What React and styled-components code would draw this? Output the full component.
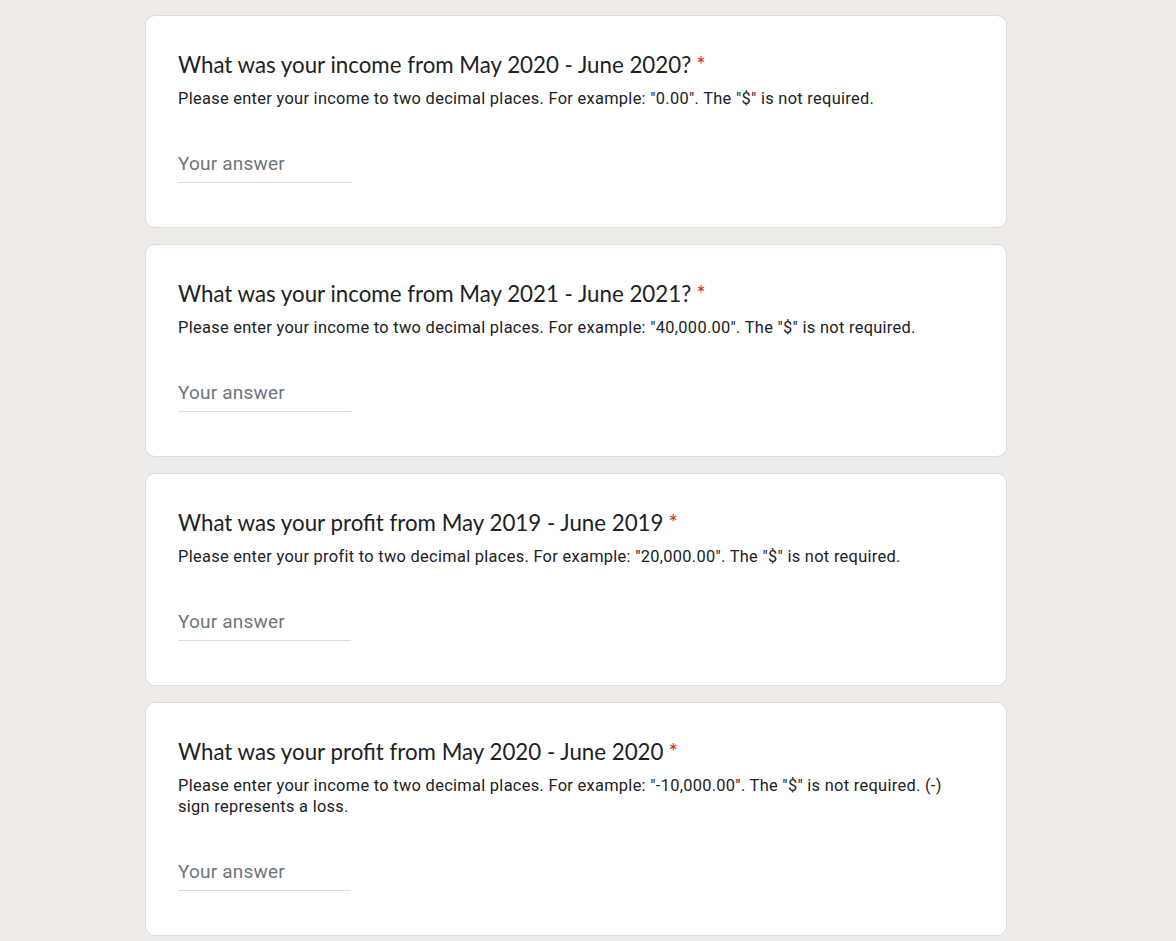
import React from 'react';
import styled, { createGlobalStyle } from 'styled-components';

const GlobalStyle = createGlobalStyle`
  html, body {
    margin: 0;
    padding: 0;
    background-color: #efebe7;
  }
`;

const Page = styled.div`
  display: flex;
  flex-direction: column;
  gap: 16px;
  width: 862px;
  padding: 15px 0 16px 145px;
  background-color: #efebe7;
`;

const Card = styled.div`
  display: flex;
  flex-direction: column;
  background-color: #ffffff;
  border: 1px solid #dadce0;
  border-radius: 10px;
  padding: 35px 32px 44px;
`;

const Title = styled.div`
  font-family: Lato, "Open Sans", sans-serif;
  font-size: 22.3px;
  line-height: 28px;
  color: #202124;
`;

const Required = styled.span`
  color: #d93025;
  margin-left: 5px;
`;

const Description = styled.div`
  margin-top: 9px;
  font-family: Roboto, "Liberation Sans", sans-serif;
  font-size: 16.4px;
  line-height: 21px;
  letter-spacing: 0.3px;
  color: #202124;
`;

const AnswerField = styled.input`
  margin-top: 42px;
  width: 173px;
  box-sizing: border-box;
  border: none;
  border-bottom: 1px solid #dadce0;
  padding: 0 0 7px 0;
  font-family: Roboto, "Liberation Sans", sans-serif;
  font-size: 19px;
  letter-spacing: 0.2px;
  line-height: 24px;
  height: 32px;
  color: #202124;
  background: transparent;
  outline: none;

  &::placeholder {
    color: #70757a;
  }
`;

const questions = [
  {
    title: 'What was your income from May 2020 - June 2020?',
    description: 'Please enter your income to two decimal places. For example: "0.00". The "$" is not required.',
  },
  {
    title: 'What was your income from May 2021 - June 2021?',
    description: 'Please enter your income to two decimal places. For example: "40,000.00". The "$" is not required.',
  },
  {
    title: 'What was your profit from May 2019 - June 2019',
    description: 'Please enter your profit to two decimal places. For example: "20,000.00". The "$" is not required.',
  },
  {
    title: 'What was your profit from May 2020 - June 2020',
    description: 'Please enter your income to two decimal places. For example: "-10,000.00". The "$" is not required. (-) sign represents a loss.',
  },
];

const App = () => {
  return (
    <>
      <GlobalStyle />
      <Page>
        {questions.map((q) => (
          <Card key={q.title}>
            <Title>
              {q.title}
              <Required>*</Required>
            </Title>
            <Description>{q.description}</Description>
            <AnswerField type="text" placeholder="Your answer" />
          </Card>
        ))}
      </Page>
    </>
  );
};

export default App;
